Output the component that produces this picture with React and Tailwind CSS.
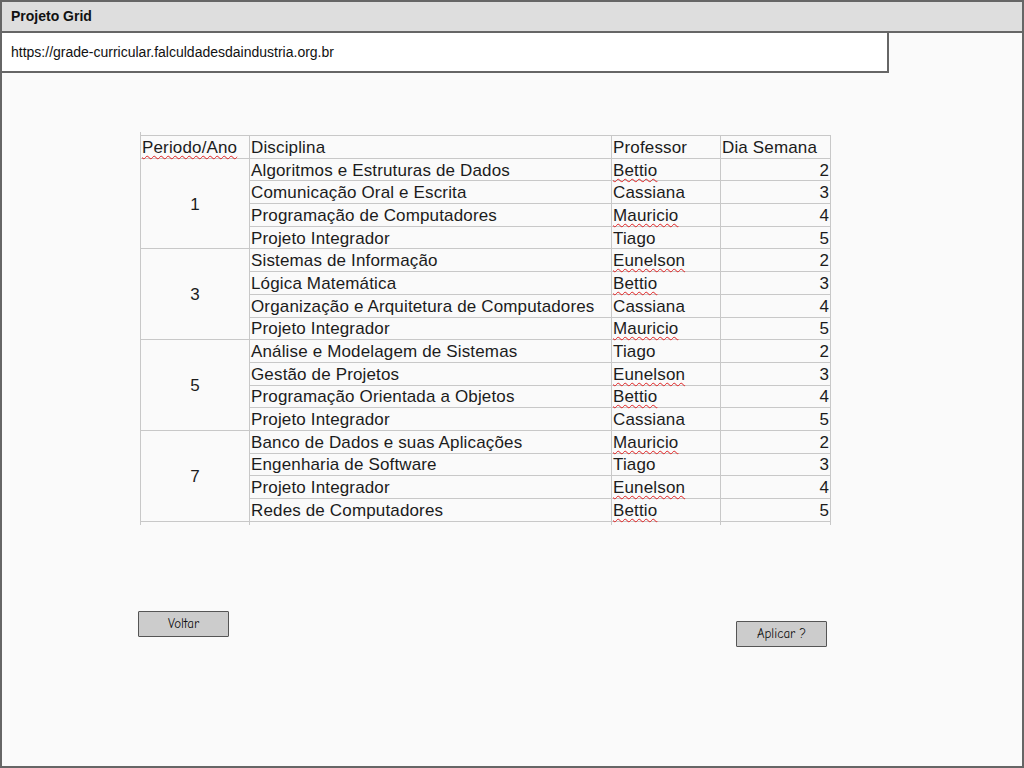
import React from 'react';

const grade = [
  {
    periodo: 1,
    rows: [
      ['Algoritmos e Estruturas de Dados', 'Bettio', 2],
      ['Comunicação Oral e Escrita', 'Cassiana', 3],
      ['Programação de Computadores', 'Mauricio', 4],
      ['Projeto Integrador', 'Tiago', 5],
    ],
  },
  {
    periodo: 3,
    rows: [
      ['Sistemas de Informação', 'Eunelson', 2],
      ['Lógica Matemática', 'Bettio', 3],
      ['Organização e Arquitetura de Computadores', 'Cassiana', 4],
      ['Projeto Integrador', 'Mauricio', 5],
    ],
  },
  {
    periodo: 5,
    rows: [
      ['Análise e Modelagem de Sistemas', 'Tiago', 2],
      ['Gestão de Projetos', 'Eunelson', 3],
      ['Programação Orientada a Objetos', 'Bettio', 4],
      ['Projeto Integrador', 'Cassiana', 5],
    ],
  },
  {
    periodo: 7,
    rows: [
      ['Banco de Dados e suas Aplicações', 'Mauricio', 2],
      ['Engenharia de Software', 'Tiago', 3],
      ['Projeto Integrador', 'Eunelson', 4],
      ['Redes de Computadores', 'Bettio', 5],
    ],
  },
];

// names the spell checker flags
const flagged = ['Bettio', 'Mauricio', 'Eunelson'];

const wavy = 'underline decoration-wavy decoration-[#e02020] decoration-1 underline-offset-[2px]';
const cell = 'border border-[#c8c8c8] px-[1px] pt-[1px] h-[22.7px] leading-none align-middle whitespace-nowrap';

const SketchButton = ({ children, className = '' }) => (
  <button
    className={`w-[91px] h-[26px] bg-[#cccccc] border border-[#555] rounded-[1px] text-[13px] text-[#111] ${className}`}
    style={{ fontFamily: '"Comic Sans MS", "Comic Neue", "DejaVu Sans", cursive' }}
  >
    {children}
  </button>
);

export default function App() {
  return (
    <div className="w-[1024px] h-[768px] border-2 border-[#666] bg-[#fafafa] flex flex-col overflow-hidden" style={{ fontFamily: '"Liberation Sans", Arial, sans-serif' }}>
      <div className="h-[31px] shrink-0 bg-[#dedede] border-b-2 border-[#666] flex items-center px-[9px] text-[14px] font-bold text-[#111]">
        Projeto Grid
      </div>
      <div className="-mt-[2px] w-[887px] h-[42px] shrink-0 bg-white border-2 border-l-0 border-[#666] flex items-center px-[9px] text-[14px] text-[#111]">
        https://grade-curricular.falculdadesdaindustria.org.br
      </div>

      <div className="ml-[138px] mt-[59px] w-[691px] border-l border-[#c8c8c8] pt-[3px]">
        <table className="border-collapse text-[17px] tracking-[0.15px] text-[#1c1c1c] -ml-px table-fixed">
          <thead>
            <tr>
              <td className={`${cell} w-[109px]`}><span className={wavy}>Periodo/Ano</span></td>
              <td className={`${cell} w-[362px]`}>Disciplina</td>
              <td className={`${cell} w-[109px]`}>Professor</td>
              <td className={`${cell} w-[110px]`}>Dia Semana</td>
            </tr>
          </thead>
          <tbody>
            {grade.map((grupo) =>
              grupo.rows.map(([disciplina, professor, dia], i) => (
                <tr key={`${grupo.periodo}-${i}`}>
                  {i === 0 && (
                    <td rowSpan={4} className={`${cell} text-center`}>{grupo.periodo}</td>
                  )}
                  <td className={cell}>{disciplina}</td>
                  <td className={cell}>
                    <span className={flagged.includes(professor) ? wavy : ''}>{professor}</span>
                  </td>
                  <td className={`${cell} text-right`}>{dia}</td>
                </tr>
              ))
            )}
          </tbody>
        </table>
        <div className="flex h-[3px]">
          <div className="w-[109px] border-r border-[#c8c8c8]" />
          <div className="w-[362px] border-r border-[#c8c8c8]" />
          <div className="w-[109px] border-r border-[#c8c8c8]" />
          <div className="w-[110px] border-r border-[#c8c8c8]" />
        </div>
      </div>

      <div className="ml-[136px] mt-[86px] w-[689px] flex justify-between items-start">
        <SketchButton>Voltar</SketchButton>
        <SketchButton className="mt-[10px]">Aplicar ?</SketchButton>
      </div>
    </div>
  );
}
